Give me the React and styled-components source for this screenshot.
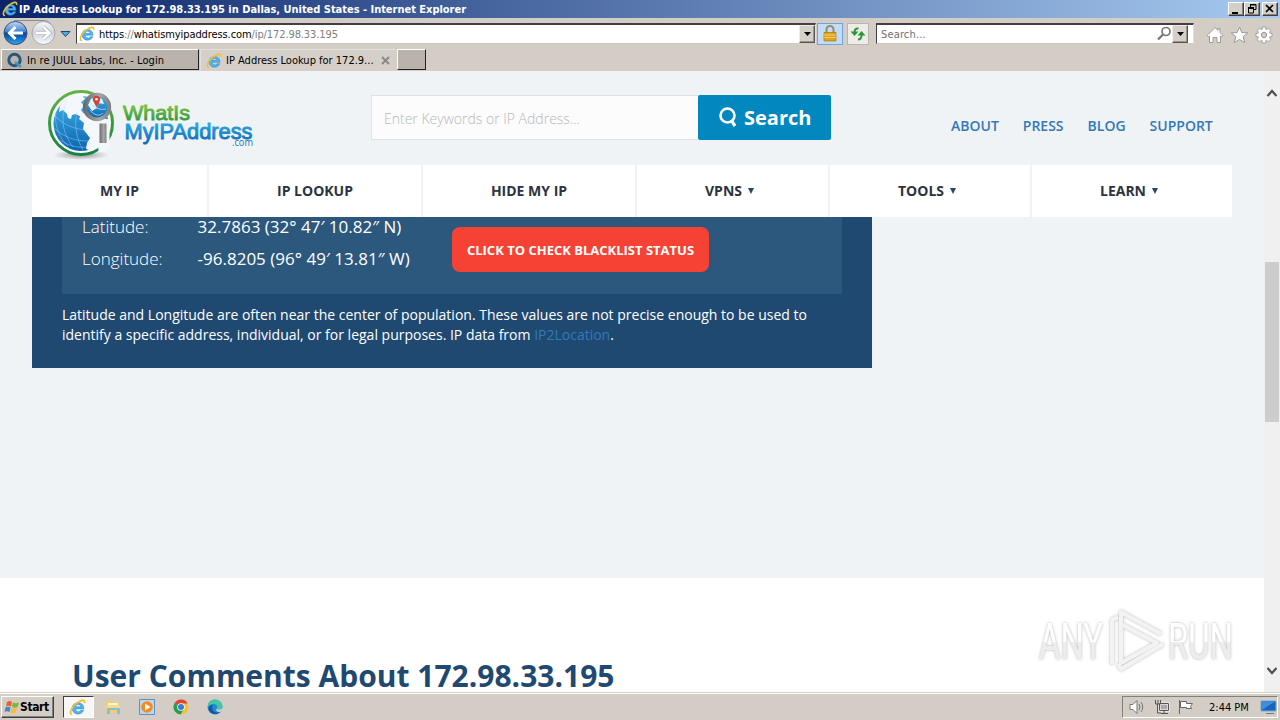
import React from "react"
import styled, { createGlobalStyle, css } from "styled-components"

const GlobalStyle = createGlobalStyle`
  * {
    box-sizing: border-box;
  }
  body {
    margin: 0;
    overflow: hidden;
  }
`

const tahoma = css`
  font-family: "DejaVu Sans Condensed", "DejaVu Sans", sans-serif;
  font-stretch: condensed;
  font-size: 11px;
  white-space: nowrap;
`

const Window = styled.div`
  position: relative;
  display: flex;
  flex-direction: column;
  width: 1280px;
  height: 720px;
  background: #d4cdc6;
  overflow: hidden;
`

const TitleBar = styled.div`
  display: flex;
  align-items: center;
  height: 18px;
  padding: 0 2px 0 2px;
  background: linear-gradient(90deg, #0a246a, #a6caf0);
`

const WindowTitle = styled.div`
  ${tahoma}
  flex: 1;
  padding-left: 1px;
  font-weight: bold;
  letter-spacing: ${props => props.$spacing || "0"};
  color: white;
`

const WindowButton = styled.div`
  display: flex;
  width: 16px;
  height: 14px;
  margin-left: ${props => props.$gap || 0}px;
  background: #d4d0c8;
  border: 1px solid;
  border-color: white #404040 #404040 white;
  box-shadow: inset -1px -1px #808080;
`

const Toolbar = styled.div`
  display: flex;
  align-items: center;
  height: 31px;
  padding-left: 2px;
  padding-right: 7px;
`

const NavButtons = styled.div`
  display: flex;
  width: 74px;
`

const Field = styled.div`
  display: flex;
  align-items: center;
  width: ${props => props.$width}px;
  height: 21px;
  margin-top: -1px;
  padding-left: 2px;
  background: white;
  border: 1px solid;
  border-top: 2px solid #443e42;
  border-left-color: #443e42;
  border-right-color: #e6dfda;
  border-bottom-color: #d4c8c4;
`

const FieldText = styled.div`
  ${tahoma}
  flex: 1;
  padding: 1px 0 0 ${props => props.$left}px;
  letter-spacing: ${props => props.$spacing || "0"};
  color: ${props => props.$color || "#808080"};
  span {
    color: black;
  }
`

const DropButton = styled.div`
  display: flex;
  align-items: center;
  justify-content: center;
  width: 16px;
  height: 18px;
  margin-right: ${props => props.$right || 0}px;
  background: #d4d0c8;
  border: 1px solid;
  border-color: #efebe6 #555 #555 #efebe6;
  box-shadow: inset -1px -1px #9a948e;
`

const ToolButton = styled.div`
  display: flex;
  align-items: center;
  justify-content: center;
  width: ${props => props.$width}px;
  height: 22px;
  margin-left: ${props => props.$left}px;
  background: ${props => (props.$active ? "#c4dcf8" : "#eeece9")};
  border: 1px solid ${props => (props.$active ? "#6fa3de" : "#b9b4ae")};
`

const ToolIcons = styled.div`
  display: flex;
  gap: 6px;
  margin-left: auto;
  padding-top: 3px;
`

const TabBar = styled.div`
  display: flex;
  height: 22px;
  padding-left: 1px;
`

const Tab = styled.div`
  ${tahoma}
  display: flex;
  align-items: center;
  width: ${props => props.$width}px;
  height: ${props => (props.$active ? 22 : 21)}px;
  margin-right: ${props => props.$gap || 0}px;
  padding: 1px 5px 0;
  background: ${props => (props.$active ? "#d6cfc9" : "#bab3ac")};
  border: 1px solid;
  border-color: ${props =>
    props.$active
      ? "#e4dfda transparent transparent #e4dfda"
      : "white #222 #222 white"};
  letter-spacing: ${props => props.$spacing || "0"};
  span {
    flex: 1;
    padding-left: 4px;
  }
`

const Viewport = styled.div`
  display: flex;
  height: 621px;
`

const Page = styled.div`
  width: 1264px;
  height: 621px;
  background: #eff3f6;
  font-family: "Open Sans", sans-serif;
  overflow: hidden;
`

const Header = styled.div`
  display: flex;
  height: 94px;
  padding-left: 46px;
`

const SearchForm = styled.div`
  display: flex;
  margin: 24px 0 0 111px;
  height: 45px;
`

const SearchInput = styled.div`
  width: 327px;
  padding-left: 12px;
  background: #fcfcfc;
  border: 1px solid #dfe2e4;
  border-right: 0;
  font-size: 14px;
  font-weight: 300;
  line-height: 46px;
  color: #b8b8b8;
`

const SearchButton = styled.div`
  display: flex;
  align-items: center;
  width: 133px;
  padding-left: 20px;
  background: #0287be;
  border-radius: 2px;
  font-size: 20px;
  font-weight: 700;
  color: white;
`

const HeaderLinks = styled.div`
  display: flex;
  gap: 24px;
  margin: 45px 0 0 120px;
  font-size: 14px;
  font-weight: 600;
  line-height: 20px;
  color: #3578b5;
`

const Menu = styled.div`
  display: flex;
  gap: 2px;
  height: 52px;
  margin-left: 32px;
`

const MenuItem = styled.div`
  display: flex;
  align-items: center;
  justify-content: center;
  gap: 6px;
  width: ${props => props.$width}px;
  padding: 0 ${props => (props.$caret ? 6 : 0)}px 1px 0;
  background: white;
  font-size: 14px;
  font-weight: 700;
  color: #2b333f;
`

const Caret = styled.i`
  margin-top: 1px;
  border: 3px solid transparent;
  border-top: 6px solid #2b4763;
  border-bottom: 0;
`

const Panel = styled.div`
  width: 840px;
  height: 151px;
  margin-left: 32px;
  padding: 0 30px;
  background: #1f4971;
`

const Details = styled.div`
  display: flex;
  height: 77px;
  padding-left: 20px;
  background: #2d587e;
  color: white;
`

const Coordinates = styled.div`
  width: 370px;
  margin-top: -6px;
`

const Row = styled.div`
  display: flex;
  height: 32px;
  font-size: 17px;
  line-height: 32px;
`

const Label = styled.div`
  width: 115.500px;
  font-weight: 300;
`

const Value = styled.div`
  letter-spacing: 0.01px;
`

const BlacklistButton = styled.div`
  width: 257px;
  height: 45px;
  margin-top: 10px;
  background: #f64234;
  border-radius: 8px;
  font-size: 13px;
  font-weight: 700;
  line-height: 46px;
  text-align: center;
`

const Note = styled.div`
  padding-top: 11px;
  font-size: 14px;
  line-height: 20px;
  color: white;
  white-space: nowrap;
  a {
    color: #3279b9;
  }
`

const Comments = styled.div`
  height: 114px;
  margin-top: 210px;
  padding: 78px 0 0 72px;
  background: white;
`

const Heading = styled.h2`
  margin: 0;
  font-size: 30px;
  font-weight: 700;
  line-height: 40px;
  color: #1f4971;
`

const ScrollBar = styled.div`
  display: flex;
  flex-direction: column;
  align-items: center;
  width: 16px;
  padding: 17px 0 16px;
  background: #f0f0f0;
`

const Thumb = styled.div`
  width: 14px;
  height: 160px;
  margin: 164px 0 auto;
  background: #cdcdcd;
`

const Taskbar = styled.div`
  ${tahoma}
  display: flex;
  align-items: center;
  height: 28px;
  padding: 1px 2px 0 1px;
  border-top: 1px solid #d4d0c8;
  box-shadow: inset 0 1px white;
`

const StartButton = styled.div`
  display: flex;
  align-items: center;
  width: 53px;
  height: 22px;
  padding-left: 2px;
  border: 1px solid;
  border-color: white #404040 #404040 white;
  box-shadow: inset -1px -1px #808080;
  font-size: 12px;
  font-weight: bold;
  letter-spacing: -0.4px;
`

const ActiveTask = styled.div`
  display: flex;
  align-items: center;
  justify-content: center;
  width: 31px;
  height: 22px;
  margin-left: 9px;
  padding-right: 2px;
  background: #f8f7f5;
  border: 1px solid;
  border-color: #404040 white white #404040;
`

const Launchers = styled.div`
  display: flex;
  gap: 18px;
  margin-left: 11px;
`

const Tray = styled.div`
  display: flex;
  align-items: center;
  width: 156px;
  height: 22px;
  margin-left: auto;
  padding-left: 5px;
  border: 1px solid;
  border-color: #808080 white white #808080;
  svg {
    margin-right: 8px;
  }
  span {
    flex: 1;
    padding-left: 7px;
  }
  svg:last-child {
    margin-right: 0;
  }
`

const Watermark = styled.div`
  position: absolute;
  left: 1030px;
  top: 604px;
`

const IeIcon = ({ size = 16 }) => (
  <svg width={size} height={size} viewBox="0 0 16 16" fill="none">
    <path
      d="M14 9.300H6.200c.3 3.200 4.200 3.300 5 1.400h2.600C12 15.800 3 15.400 3 8.700 3 1.900 14.200 1.500 14 9.300zM6.200 7.300h4.900C10.800 4.400 6.500 4.400 6.200 7.300z"
      fill="#4fb4ee"
      stroke="#2585cf"
      strokeWidth=".5"
      fillRule="evenodd"
    />
    <path
      d="M3 14.500C-.2 14.400 1.500 8.300 6.700 4.300 11 1.100 15.400-.2 14.600 4"
      stroke="#f2bf2c"
      strokeWidth="1.600"
    />
  </svg>
)

const DownArrow = () => (
  <svg width="7" height="4">
    <path d="M0 0h7L3.500 4z" fill="black" />
  </svg>
)

const SiteLogo = () => (
  <svg width="214" height="94" viewBox="46 71 214 94">
    <defs>
      <linearGradient id="ring" x2="0" y2="1">
        <stop stopColor="#63b344" />
        <stop offset="1" stopColor="#168141" />
      </linearGradient>
      <linearGradient id="ocean" x2="0" y2="1">
        <stop stopColor="#45b3e8" />
        <stop offset="1" stopColor="#0964b1" />
      </linearGradient>
      <linearGradient id="metal">
        <stop stopColor="#6c6c6c" />
        <stop offset=".6" stopColor="#a8a8a8" />
        <stop offset="1" stopColor="#808080" />
      </linearGradient>
      <linearGradient id="what" x2="0" y2="1">
        <stop offset=".3" stopColor="#6fbb45" />
        <stop offset="1" stopColor="#229044" />
      </linearGradient>
      <linearGradient id="address" x2="0" y2="1">
        <stop offset=".2" stopColor="#28a6df" />
        <stop offset="1" stopColor="#1166b8" />
      </linearGradient>
      <radialGradient id="shade">
        <stop stopColor="#777" stopOpacity=".8" />
        <stop offset="1" stopColor="#888" stopOpacity="0" />
      </radialGradient>
    </defs>
    <ellipse cx="81" cy="155" rx="28" ry="5" fill="url(#shade)" />
    <circle cx="81" cy="123" r="31.500" fill="#f8fafb" stroke="url(#ring)" strokeWidth="3" />
    <circle cx="81" cy="123.500" r="27.500" fill="url(#ocean)" />
    <g fill="#f4f8fb">
      <path d="M60 106c5-7 13-11 22-11l3 4-4 3 3 4-3 4 4 5-4 2-5-3-4 1-1 4-3-1-1-4-4-4-4 2z" />
      <path d="M82 113l8 2 6 4 9 1 4 6-2 13-7 8-8 4-6-2 1-6 3-5-7-9 1-6-5-4z" />
    </g>
    <g fill="none" stroke="#b5def7" strokeWidth=".6" opacity=".7">
      <path d="M55 116c9 9 19 13 31 14M54 128c10 9 20 13 34 13M67 101c-7 15-5 32 6 46M56 112c-2 12 3 26 12 34M77 112c-3 12-1 26 6 38M60 140c9 6 18 8 27 7" />
    </g>
    <path d="M97 119h12.500v27l-3 6h-8z" fill="#f4f7f9" />
    <path d="M99.500 123.500h7V143h-7z" fill="url(#metal)" />
    <circle cx="97" cy="107" r="14" fill="#f4f7f9" />
    <circle cx="97" cy="107" r="12.300" fill="url(#ocean)" stroke="url(#metal)" strokeWidth="3.800" />
    <path d="M88 105l3-6 5-2 6 2 2 5-6-1-1 5-5 3z" fill="#e7f3fa" />
    <path d="M90 110c4 5 9 7 13 3M92 105c5 4 9 5 14 4" fill="none" stroke="#b5def7" strokeWidth=".8" />
    <path d="M96.500 107.500l-3.300-6.500a3.700 3.700 0 1 1 6.600 0z" fill="#db3e32" />
    <circle cx="96.500" cy="99.300" r="1.300" fill="white" />
    <g fontFamily="Liberation Sans, Arial, sans-serif">
      <text x="123" y="120" fontSize="21" fill="url(#what)" stroke="url(#what)" strokeWidth=".9" textLength="67" lengthAdjust="spacingAndGlyphs">WhatIs</text>
      <text x="124.500" y="138.500" fontSize="22" fill="url(#address)" stroke="url(#address)" strokeWidth=".9" textLength="128" lengthAdjust="spacingAndGlyphs">MyIPAddress</text>
    </g>
    <text x="232" y="146" fontFamily="Open Sans, sans-serif" fontSize="10" fill="#1874bd" textLength="21" lengthAdjust="spacingAndGlyphs">.com</text>
  </svg>
)

const menu = [
  { name: "MY IP", width: 175 },
  { name: "IP LOOKUP", width: 212 },
  { name: "HIDE MY IP", width: 212 },
  { name: "VPNS", width: 191, caret: true },
  { name: "TOOLS", width: 200, caret: true },
  { name: "LEARN", width: 200, caret: true },
]

const App = () => (
  <Window>
    <GlobalStyle />
    <TitleBar>
      <IeIcon />
      <WindowTitle $spacing="-0.02px">
        IP Address Lookup for 172.98.33.195 in Dallas, United States - Internet Explorer
      </WindowTitle>
      <WindowButton>
        <svg width="14" height="12"><path d="M3 9h6v2H3z" /></svg>
      </WindowButton>
      <WindowButton>
        <svg width="14" height="12" fill="none" stroke="black">
          <path d="M5 2h6M5.500 1v3M5 1.500h6v5H9M3 4.500h6M3 5.500h6M3.500 5v5h5V5" />
        </svg>
      </WindowButton>
      <WindowButton $gap={2}>
        <svg width="14" height="12"><path d="M3 2l7 7M10 2L3 9" stroke="black" strokeWidth="1.700" /></svg>
      </WindowButton>
    </TitleBar>

    <Toolbar>
      <NavButtons>
        <svg width="74" height="29" viewBox="2 19 74 29">
          <defs>
            <linearGradient id="back" x2="0" y2="1">
              <stop stopColor="#c4dcf5" />
              <stop offset=".45" stopColor="#3c80cd" />
              <stop offset=".5" stopColor="#08429b" />
              <stop offset="1" stopColor="#2aa7ee" />
            </linearGradient>
            <linearGradient id="forward" x2="0" y2="1">
              <stop stopColor="#f7f8fa" />
              <stop offset=".5" stopColor="#ced5dd" />
              <stop offset="1" stopColor="#fafcff" />
            </linearGradient>
          </defs>
          <path d="M14 20.500h29c5 0 8 3 10 7" fill="none" stroke="#8f8d8d" />
          <circle cx="15.500" cy="33" r="11.500" fill="url(#back)" stroke="#375078" />
          <circle cx="43.500" cy="33" r="11.500" fill="url(#forward)" stroke="#a4a8ae" />
          <path d="M23 33H10M15.500 27l-6 6 6 6" fill="none" stroke="white" strokeWidth="3" />
          <path d="M36 33h13M43.500 27l6 6-6 6" fill="none" stroke="#b5bbc2" strokeWidth="4" />
          <path d="M36 33h13M43.500 27l6 6-6 6" fill="none" stroke="white" strokeWidth="2.400" />
          <path d="M61 31.500h9l-4.500 5z" fill="#56a8de" stroke="#17477d" />
        </svg>
      </NavButtons>
      <Field $width={740}>
        <IeIcon />
        <FieldText $left={4} $spacing="-0.1px">
          <span>https</span>://<span>whatismyipaddress.com</span>/ip/172.98.33.195
        </FieldText>
        <DropButton><DownArrow /></DropButton>
      </Field>
      <ToolButton $width={26} $left={1} $active>
        <svg width="14" height="17">
          <path d="M3.500 8V4.500a3.500 3.500 0 0 1 7 0V8" fill="none" stroke="#9d8b61" strokeWidth="2" />
          <path d="M1 7.500h12V16H1z" fill="#e0a51d" stroke="#a8780e" strokeWidth=".7" />
          <path d="M1 10h12M1 12.500h12" stroke="#f6cf61" />
        </svg>
      </ToolButton>
      <ToolButton $width={22} $left={4}>
        <svg width="16" height="16" fill="none" stroke="#2c9637" strokeWidth="2">
          <path d="M8.500 2.500C5.500 2 4.500 4 4.500 6.500" />
          <path d="M8 13.500c3 0 3.500-2 3.500-4.500" />
          <path d="M.5 5.500h8L4.500 10zM7.500 9.500h8L11.500 5z" fill="#2c9637" stroke="none" />
        </svg>
      </ToolButton>
      <div style={{ width: 7 }} />
      <Field $width={318}>
        <FieldText $left={2} $spacing="0.15px" $color="#707070">Search...</FieldText>
        <svg width="15" height="15" fill="none" stroke="#777">
          <circle cx="9" cy="5.500" r="4" strokeWidth="1.700" />
          <path d="M6 8.500L1 13.500" strokeWidth="2.300" />
        </svg>
        <DropButton $right={5}><DownArrow /></DropButton>
      </Field>
      <ToolIcons>
        <svg width="18" height="18" fill="white" stroke="#999" strokeWidth="1">
          <path d="M1 9.500L9 1.500l3 3v-2h2v4l3 3-1.500 1L14.500 10v6.500H11v-5H7v5H3.500V10l-1 .800z" />
        </svg>
        <svg width="19" height="18" fill="white" stroke="#999" strokeWidth="1">
          <path d="M9.500 1l2.300 5.500 6 .4-4.600 3.800 1.500 5.900-5.200-3.200-5.200 3.200 1.500-5.900L1.200 6.900l6-.4z" />
        </svg>
        <svg width="18" height="18" viewBox="-9 -9 18 18">
          {[0, 45, 90, 135].map(a => (
            <path key={a} d="M-1.800-8h3.600V8h-3.600z" transform={`rotate(${a})`} fill="white" stroke="#999" strokeWidth=".9" />
          ))}
          <circle r="5.800" fill="white" />
          <circle r="2.700" fill="#d4cdc6" stroke="#999" strokeWidth="1" />
        </svg>
      </ToolIcons>
    </Toolbar>

    <TabBar>
      <Tab $width={198} $gap={1} $spacing="0.07px">
        <svg width="16" height="16" fill="none">
          <circle cx="7.500" cy="8" r="5.700" stroke="#27577b" strokeWidth="3" />
          <path d="M8 10l6 5" stroke="#4d93be" strokeWidth="2.500" />
        </svg>
        <span>In re JUUL Labs, Inc. - Login</span>
      </Tab>
      <Tab $width={196} $gap={1} $active>
        <IeIcon />
        <span>IP Address Lookup for 172.9...</span>
        <svg width="9" height="9"><path d="M1 1l7 7M8 1L1 8" stroke="#888" strokeWidth="2" /></svg>
      </Tab>
      <Tab $width={29} />
    </TabBar>

    <Viewport>
      <Page>
        <Header>
          <SiteLogo />
          <SearchForm>
            <SearchInput>Enter Keywords or IP Address...</SearchInput>
            <SearchButton>
              <svg width="26" height="24" fill="none" stroke="white" strokeWidth="2.600">
                <circle cx="9.500" cy="9.500" r="7" />
                <path d="M13 14l4 6" strokeWidth="3.200" />
              </svg>
              Search
            </SearchButton>
          </SearchForm>
          <HeaderLinks>
            <span>ABOUT</span>
            <span>PRESS</span>
            <span>BLOG</span>
            <span>SUPPORT</span>
          </HeaderLinks>
        </Header>
        <Menu>
          {menu.map(item => (
            <MenuItem key={item.name} $width={item.width} $caret={item.caret}>
              {item.name}
              {item.caret && <Caret />}
            </MenuItem>
          ))}
        </Menu>
        <Panel>
          <Details>
            <Coordinates>
              <Row>
                <Label>Latitude:</Label>
                <Value>32.7863 (32° 47′ 10.82″ N)</Value>
              </Row>
              <Row>
                <Label>Longitude:</Label>
                <Value>-96.8205 (96° 49′ 13.81″ W)</Value>
              </Row>
            </Coordinates>
            <BlacklistButton>CLICK TO CHECK BLACKLIST STATUS</BlacklistButton>
          </Details>
          <Note>
            Latitude and Longitude are often near the center of population. These values are not precise enough to be used to
            <br />
            identify a specific address, individual, or for legal purposes. IP data from <a>IP2Location</a>.
          </Note>
        </Panel>
        <Comments>
          <Heading>User Comments About 172.98.33.195</Heading>
        </Comments>
      </Page>
      <ScrollBar>
        <svg width="12" height="10" fill="none" stroke="#505050" strokeWidth="2.200"><path d="M1.500 8L6 3l4.500 5" /></svg>
        <Thumb />
        <svg width="12" height="10" fill="none" stroke="#505050" strokeWidth="2.200"><path d="M1.500 2L6 7l4.500-5" /></svg>
      </ScrollBar>
    </Viewport>

    <Taskbar>
      <StartButton>
        <svg width="16" height="16">
          <path d="M3 3q3-2 5 0L7 7.500Q4.500 6 2 7.500z" fill="#e8602c" />
          <path d="M9 3.500q2.500 1.500 6 0L13.500 8Q11 9.500 8 8z" fill="#74b83e" />
          <path d="M1.500 8.500q3-1.500 5 0L5.500 13Q3 11.500.5 13z" fill="#3f86d4" />
          <path d="M7.500 9q3 1.500 5.500 0l-1.500 4.500q-2.500 1.500-5 0z" fill="#f5bd27" />
        </svg>
        Start
      </StartButton>
      <ActiveTask><IeIcon size={17} /></ActiveTask>
      <Launchers>
        <svg width="16" height="16">
          <path d="M1 2l5-1 1 2h7v11H1z" fill="#efcf72" />
          <path d="M3 4h10v3H3z" fill="#fff6cf" />
          <path d="M2 7h13v8h-3v-4H5v4H2z" fill="#86bfdd" />
          <path d="M2 6h13v3H2z" fill="#f3dc8a" />
        </svg>
        <svg width="16" height="16">
          <path d="M.5.500h15v15H.5z" fill="#b9d7ee" stroke="#5794c4" />
          <circle cx="8" cy="8" r="5.800" fill="#f38b1e" />
          <path d="M6 4.500l5.500 3.500L6 11.500z" fill="white" />
        </svg>
        <svg width="16" height="16">
          <circle cx="8" cy="8" r="7.500" fill="#f3c52d" />
          <path d="M8 8L1.500 4.200A7.500 7.500 0 0 1 14.600 4.500H8z" fill="#df4435" />
          <path d="M8 8L1.500 4.200A7.500 7.500 0 0 0 7.500 15.500L11 10z" fill="#299b50" />
          <circle cx="8" cy="8" r="3.800" fill="white" />
          <circle cx="8" cy="8" r="3" fill="#3979dd" />
        </svg>
        <svg width="16" height="16">
          <circle cx="8" cy="8" r="7.500" fill="#2389d2" />
          <path d="M1 6C3-2 15-.5 15.500 7c.2 3-3.500 4-6 3 2-2 .5-5-3-5C4 5 2 6 1 8z" fill="#43c7a4" />
          <path d="M6 6c-3 5 2 9 7 7-5 5-13 0-11-5 .7-1.500 2.500-2.400 4-2z" fill="#1255a0" />
          <path d="M9.500 10c2.500 1 5 .4 6-1.500l.5 2-3 2.500c-3 0-4.500-1.500-3.500-3z" fill="#d4cdc6" />
        </svg>
      </Launchers>
      <Tray>
        <svg width="18" height="16" fill="none" stroke="#777">
          <path d="M2 5.500h3l4-4v13l-4-4H2z" fill="white" />
          <path d="M11 5q2 3 0 6M13 3q3.500 5 0 10" />
        </svg>
        <svg width="16" height="16" fill="none" stroke="#555">
          <path d="M5.500 4.500h9v7h-9z" fill="#aaa" stroke="white" strokeWidth="2" />
          <path d="M5.500 4.500h9v7h-9zM7 14.500h7M10 12v2M1.500 1v4h5V1M4 1v4M3.500 5v9H7" />
        </svg>
        <svg width="16" height="16" fill="white" stroke="#666">
          <path d="M2.500 2.500h6v2h6l-2 3 1 2h-5v-1h-6z" />
          <path d="M1.500 1v14" />
        </svg>
        <span>2:44 PM</span>
        <svg width="17" height="16">
          <path d="M1 2h15v10H1z" fill="#1764bd" stroke="#7ba9d8" />
          <path d="M2 11V3h12z" fill="#3d91dc" />
          <path d="M6 14.500h8" stroke="#777" />
        </svg>
      </Tray>
    </Taskbar>

    <Watermark>
      <svg width="210" height="80" viewBox="1030 604 210 80">
        <defs>
          <filter id="soft" x="-10%" y="-20%" width="120%" height="140%">
            <feDropShadow dx="0" dy="0" stdDeviation="1.500" floodColor="#999" floodOpacity=".75" />
          </filter>
          <linearGradient id="fade" x2="0" y2="1">
            <stop offset=".49" stopColor="#fff" />
            <stop offset=".51" stopColor="#ededed" />
          </linearGradient>
        </defs>
        <g filter="url(#soft)">
          <g fill="url(#fade)" fontFamily="Roboto, sans-serif" fontSize="50">
            <text x="1039" y="659" textLength="64" lengthAdjust="spacingAndGlyphs">ANY</text>
            <text x="1168" y="659" textLength="65" lengthAdjust="spacingAndGlyphs">RUN</text>
          </g>
          <g fill="none" stroke="#f3f3f3" strokeWidth="4" strokeLinejoin="round">
            <path d="M1118 617l-6 3v44M1118 664l3 5 42-25" />
            <path d="M1121 658V612l40 22M1121 624l36 19-36 20z" />
          </g>
        </g>
      </svg>
    </Watermark>
  </Window>
)

export default App
